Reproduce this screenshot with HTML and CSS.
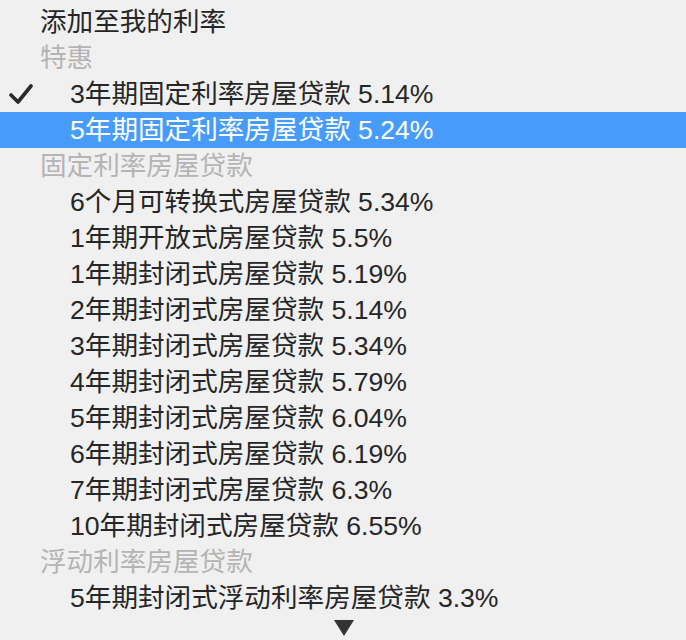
FILE: index.html
```html
<!DOCTYPE html>
<html lang="zh-CN">

<head>
    <meta charset="UTF-8">
    <title>利率菜单</title>
    <link rel="stylesheet" href="styles.css">
</head>

<body>
    <ul class="menu">
        <li class="item top">添加至我的利率</li>
        <li class="head">特惠</li>
        <li class="item checked">
            <svg class="check" width="24" height="22" viewBox="0 0 24 22">
                <path d="M2 12 L9 19 L22 3" fill="none" stroke="#2a2a2a" stroke-width="3.6" stroke-linecap="round" stroke-linejoin="round"/>
            </svg>
            3年期固定利率房屋贷款 5.14%
        </li>
        <li class="item on">5年期固定利率房屋贷款 5.24%</li>
        <li class="head">固定利率房屋贷款</li>
        <li class="item">6个月可转换式房屋贷款 5.34%</li>
        <li class="item">1年期开放式房屋贷款 5.5%</li>
        <li class="item">1年期封闭式房屋贷款 5.19%</li>
        <li class="item">2年期封闭式房屋贷款 5.14%</li>
        <li class="item">3年期封闭式房屋贷款 5.34%</li>
        <li class="item">4年期封闭式房屋贷款 5.79%</li>
        <li class="item">5年期封闭式房屋贷款 6.04%</li>
        <li class="item">6年期封闭式房屋贷款 6.19%</li>
        <li class="item">7年期封闭式房屋贷款 6.3%</li>
        <li class="item">10年期封闭式房屋贷款 6.55%</li>
        <li class="head">浮动利率房屋贷款</li>
        <li class="item">5年期封闭式浮动利率房屋贷款 3.3%</li>
    </ul>
    <div class="more">
        <svg width="20" height="16" viewBox="0 0 20 16">
            <path d="M0 0 H20 L10 16 Z" fill="#333"/>
        </svg>
    </div>
</body>

</html>
```

FILE: styles.css
```css
* {
    margin: 0;
    padding: 0;
    list-style: none;
}

body {
    background-color: #f0f0f0;
    font-family: "Liberation Sans", "Noto Sans CJK SC", sans-serif;
    font-size: 26.6px;
    color: #262626;
    width: 686px;
    height: 640px;
    overflow: hidden;
}

.menu {
    padding-top: 4px;
}

.menu li {
    height: 36px;
    line-height: 36px;
    white-space: nowrap;
    position: relative;
}

.item {
    padding-left: 70px;
}

.item.top {
    padding-left: 40px;
}

/* 分组标题 */
.head {
    padding-left: 40px;
    color: #b4b4b4;
}

/* 当前选中的行 */
.item.on {
    background-color: #479cfb;
    color: #fff;
}

.check {
    position: absolute;
    left: 9px;
    top: 7px;
}

.more {
    display: flex;
    justify-content: center;
    padding-top: 4px;
    padding-left: 2px;
}
```
